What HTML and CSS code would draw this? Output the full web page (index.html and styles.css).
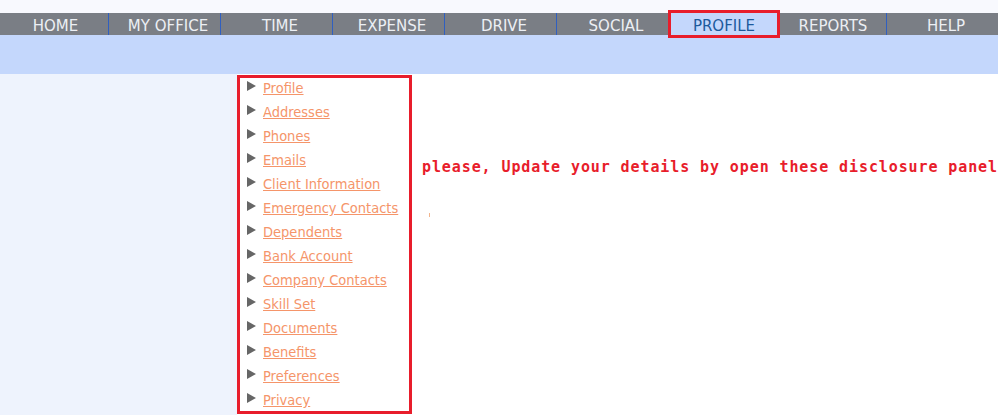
FILE: index.html
```html
<!DOCTYPE html>
<html lang="en">
<head>
<meta charset="utf-8">
<title>Profile</title>
<link rel="stylesheet" href="styles.css">
</head>
<body>
<div class="topstrip"></div>
<nav class="nav">
  <a class="nav-item nav-home" href="#">HOME</a>
  <a class="nav-item" href="#">MY OFFICE</a>
  <a class="nav-item" href="#">TIME</a>
  <a class="nav-item" href="#">EXPENSE</a>
  <a class="nav-item" href="#">DRIVE</a>
  <a class="nav-item" href="#">SOCIAL</a>
  <a class="nav-item nav-active" href="#">PROFILE</a>
  <a class="nav-item nav-reports" href="#">REPORTS</a>
  <a class="nav-item" href="#">HELP</a>
</nav>
<div class="band"></div>
<main class="content">
  <aside class="side"></aside>
  <div class="panel-box">
    <ul class="panels">
      <li class="panel"><span class="arrow"></span><a href="#">Profile</a></li>
      <li class="panel"><span class="arrow"></span><a href="#">Addresses</a></li>
      <li class="panel"><span class="arrow"></span><a href="#">Phones</a></li>
      <li class="panel"><span class="arrow"></span><a href="#">Emails</a></li>
      <li class="panel"><span class="arrow"></span><a href="#">Client Information</a></li>
      <li class="panel"><span class="arrow"></span><a href="#">Emergency Contacts</a></li>
      <li class="panel"><span class="arrow"></span><a href="#">Dependents</a></li>
      <li class="panel"><span class="arrow"></span><a href="#">Bank Account</a></li>
      <li class="panel"><span class="arrow"></span><a href="#">Company Contacts</a></li>
      <li class="panel"><span class="arrow"></span><a href="#">Skill Set</a></li>
      <li class="panel"><span class="arrow"></span><a href="#">Documents</a></li>
      <li class="panel"><span class="arrow"></span><a href="#">Benefits</a></li>
      <li class="panel"><span class="arrow"></span><a href="#">Preferences</a></li>
      <li class="panel"><span class="arrow"></span><a href="#">Privacy</a></li>
    </ul>
  </div>
  <section class="msg">
    <p class="notice">please, Update your details by open these disclosure panel</p>
    <span class="tick"></span>
  </section>
</main>
</body>
</html>
```
FILE: styles.css
```css
html, body {
  margin: 0;
  padding: 0;
}
body {
  width: 998px;
  height: 415px;
  overflow: hidden;
  background: #eef3fd;
  font-family: "DejaVu Sans", Verdana, sans-serif;
}
.topstrip {
  height: 13px;
  background: #f8f9fe;
}
.nav {
  display: flex;
  height: 22px;
  background: #7a7e85;
}
.nav-item {
  box-sizing: border-box;
  width: 112px;
  height: 22px;
  padding: 4px 0 0 7px;
  border-left: 1px solid #2f5fc0;
  color: #eceff4;
  text-decoration: none;
  text-align: center;
  font-size: 15px;
  line-height: 18px;
  white-space: nowrap;
}
.nav-item:first-child {
  width: 108px;
  border-left: none;
  padding-left: 3px;
}
.nav-active {
  width: 106px;
  margin-left: 3px;
  padding-left: 0;
  border-left: none;
  background: #c4d7fc;
  color: #1d5a9c;
  outline: 3px solid #e81d2b;
  position: relative;
  z-index: 1;
}
.nav-reports {
  width: 109px;
  border-left: none;
  padding-left: 3px;
}
.band {
  height: 39px;
  background: #c4d7fc;
}
.content {
  display: flex;
  height: 341px;
  background: #ffffff;
}
.side {
  width: 237px;
  flex: none;
  background: #eef3fd;
}
.panel-box {
  box-sizing: border-box;
  width: 175px;
  height: 339px;
  margin-top: 1px;
  border: 3px solid #e81d2b;
  background: #ffffff;
  flex: none;
}
.panels {
  list-style: none;
  margin: -2px 0 0 0;
  padding: 0 0 0 7px;
}
.panel {
  display: flex;
  align-items: center;
  height: 24px;
  font-size: 14.5px;
  font-family: "DejaVu Sans", Verdana, sans-serif;
  font-stretch: condensed;
}
.arrow {
  flex: none;
  width: 0;
  height: 0;
  border-left: 9px solid #666666;
  border-top: 5px solid transparent;
  border-bottom: 5px solid transparent;
  margin: -4px 7px 0 0;
}
.panel a {
  color: #f5956a;
  text-decoration: underline;
  white-space: nowrap;
}
.msg {
  position: relative;
  flex: 1;
  min-width: 0;
  padding-left: 10px;
}
.notice {
  margin: 83px 0 0 0;
  font-family: "DejaVu Sans Mono", "Liberation Mono", monospace;
  font-weight: bold;
  font-size: 15px;
  letter-spacing: 0.9px;
  line-height: 20px;
  color: #e81d2b;
  white-space: nowrap;
}
.tick {
  position: absolute;
  left: 17px;
  top: 139px;
  width: 1px;
  height: 4px;
  background: #f2b48c;
}
```
